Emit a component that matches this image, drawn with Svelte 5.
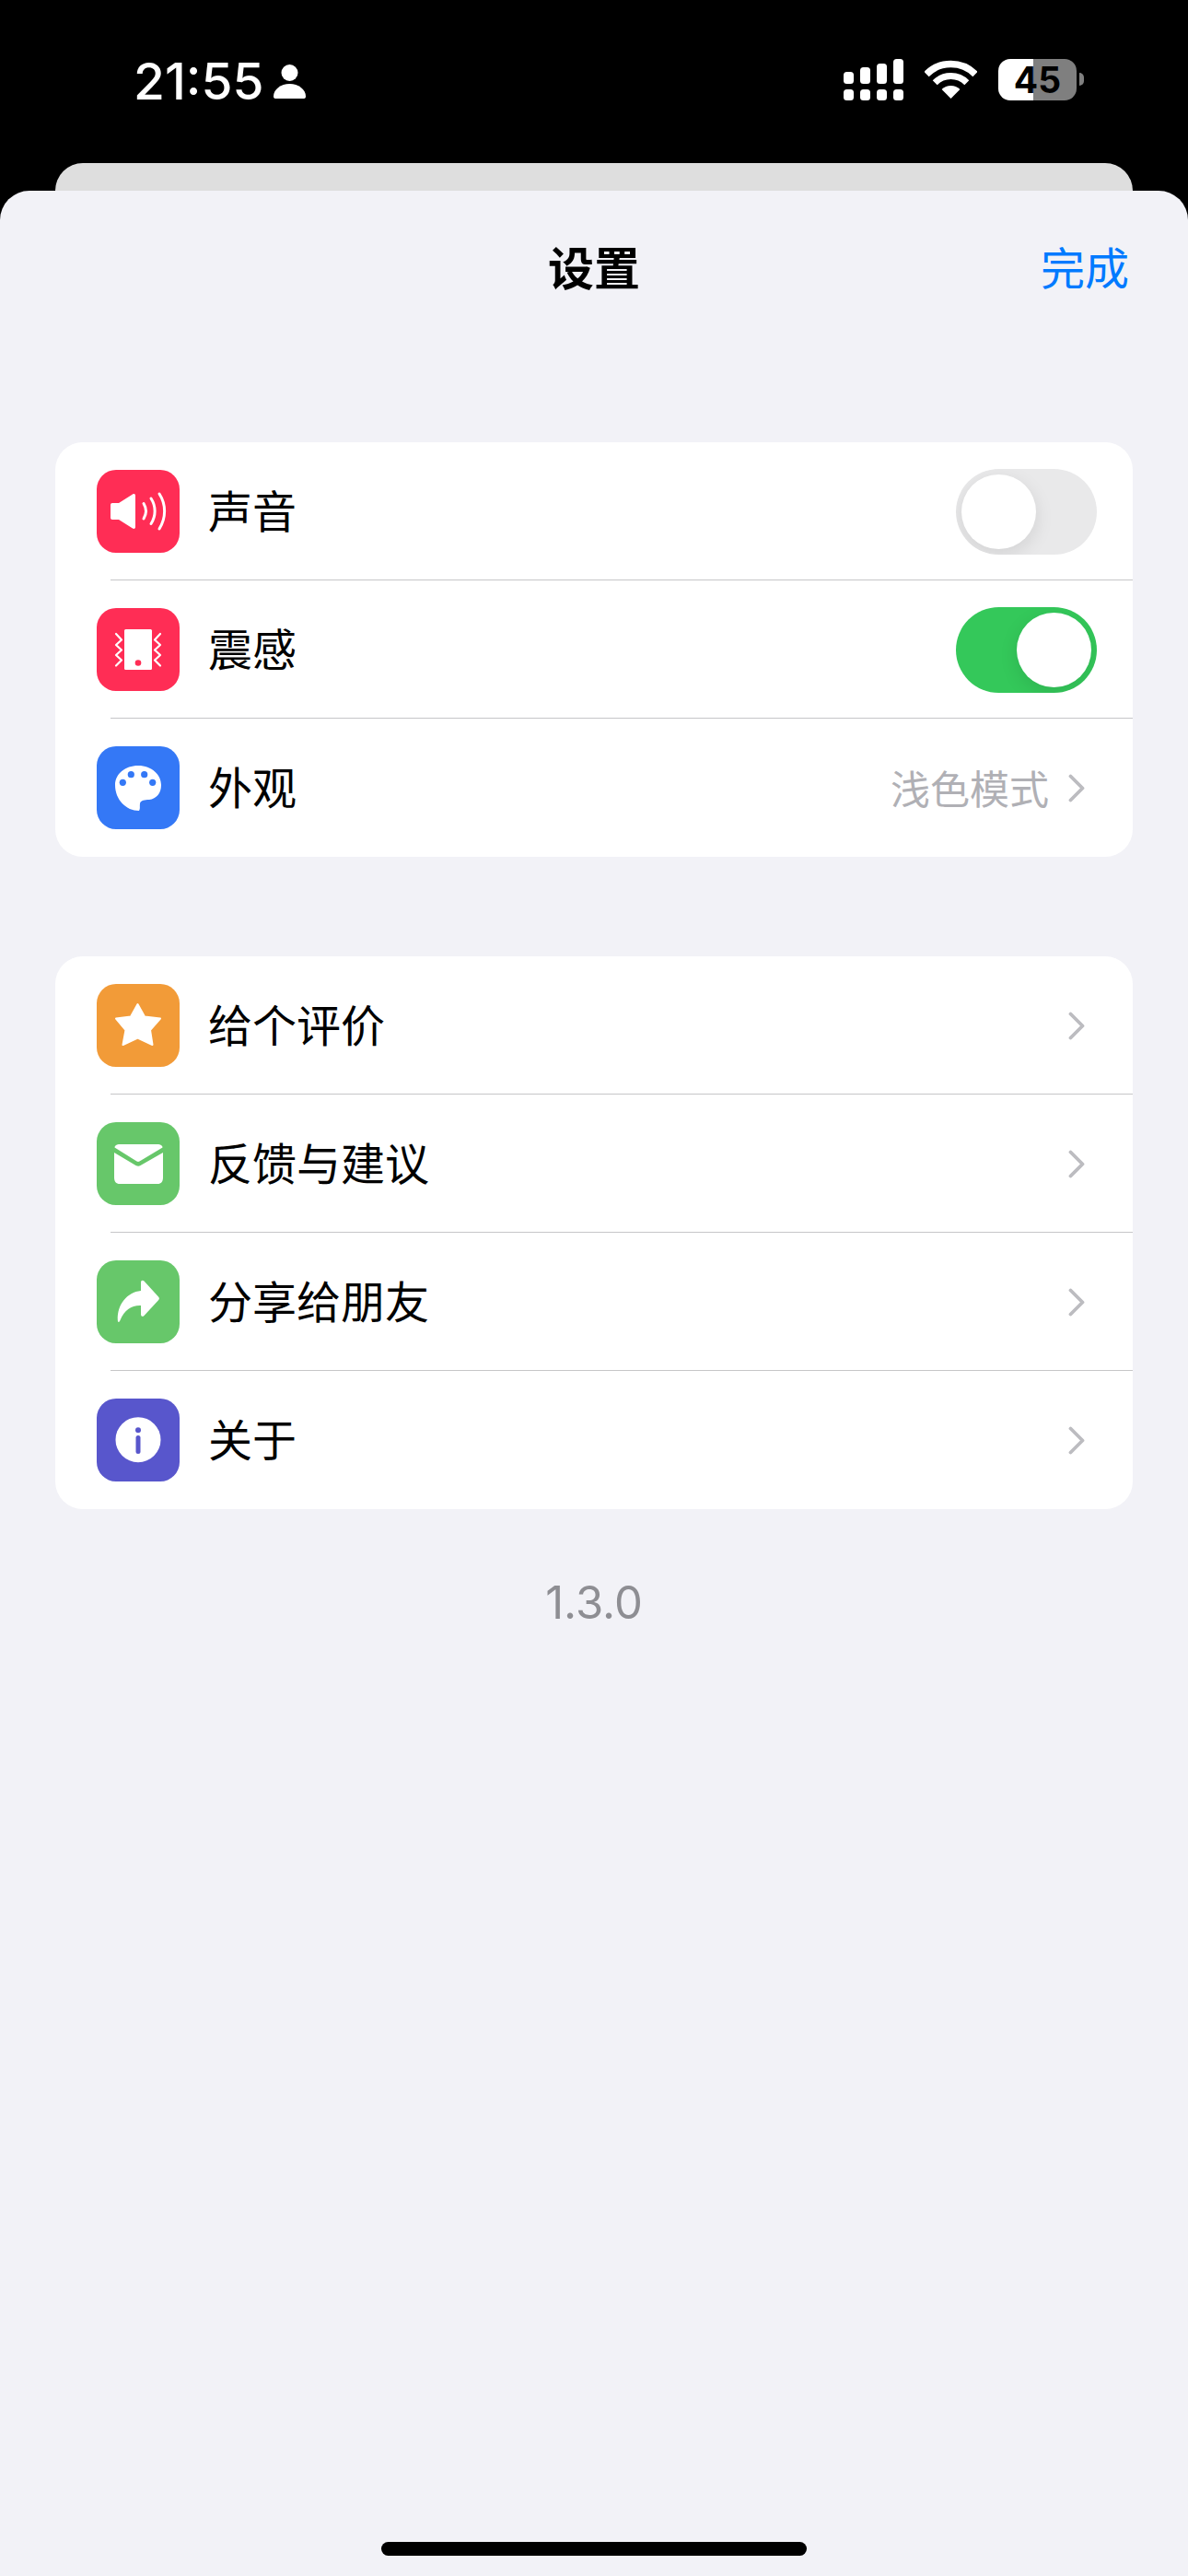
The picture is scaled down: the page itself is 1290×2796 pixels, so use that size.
<script>
  const sections = [
    [
      { icon: "sound", color: "#ff2d55", label: "声音", toggle: false },
      { icon: "vibrate", color: "#ff2d55", label: "震感", toggle: true },
      { icon: "palette", color: "#3478f6", label: "外观", value: "浅色模式" },
    ],
    [
      { icon: "star", color: "#f29b38", label: "给个评价" },
      { icon: "mail", color: "#67c76a", label: "反馈与建议" },
      { icon: "share", color: "#67c76a", label: "分享给朋友" },
      { icon: "info", color: "#5856cc", label: "关于" },
    ],
  ];
</script>

<div class="page">
  <div class="status">
    <div class="status-left">
      <span class="time">21:55</span>
      <svg class="person" width="35" height="38" viewBox="0 0 35 38">
        <circle cx="17.5" cy="10" r="9" fill="#fff" />
        <path d="M2 38C.5 38 0 37 0 35.5 0 28 8 22 17.5 22S35 28 35 35.5C35 37 34.500 38 33 38Z" fill="#fff" />
      </svg>
    </div>
    <div class="status-right">
      <svg class="signal" width="65" height="45" viewBox="0 0 65 45" fill="#fff">
        <rect x="0" y="14" width="11" height="13" rx="3.500" />
        <rect x="18" y="9" width="11" height="18" rx="3.500" />
        <rect x="36" y="5" width="11" height="22" rx="3.500" />
        <rect x="54" y="0" width="11" height="27" rx="3.500" />
        <rect x="0" y="33" width="11" height="12" rx="3.500" />
        <rect x="18" y="33" width="11" height="12" rx="3.500" />
        <rect x="36" y="33" width="11" height="12" rx="3.500" />
        <rect x="54" y="33" width="11" height="12" rx="3.500" />
      </svg>
      <svg class="wifi" width="57" height="42" viewBox="0 0 57 42" fill="none" stroke="#fff">
        <path d="M2 15.500A37.500 37.500 0 0 1 55 15.500" stroke-width="7.500" />
        <path d="M11.200 24.700A24.500 24.500 0 0 1 45.800 24.700" stroke-width="7" />
        <path d="M28.500 42L18.600 32.100A14 14 0 0 1 38.400 32.100Z" fill="#fff" stroke="none" />
      </svg>
      <div class="battery">45</div>
      <div class="battery-cap"></div>
    </div>
  </div>

  <div class="back-sheet"></div>

  <div class="sheet">
    <div class="nav">
      <span></span>
      <span class="title">设置</span>
      <span class="done">完成</span>
    </div>

    {#each sections as rows}
      <div class="card">
        {#each rows as row, i}
          {#if i > 0}<div class="sep"></div>{/if}
          <div class="row">
            <div class="icon" style="background: {row.color}">
              <svg width="90" height="90" viewBox="0 0 90 90">
                {#if row.icon === "sound"}
                  <path d="M17 36H24L39 26.500C41 25.500 42 26.500 42 28V62C42 63.500 41 64.500 39 63.500L24 54H17C15.800 54 15 53.200 15 52V38C15 36.800 15.800 36 17 36Z" fill="#fff" />
                  <g fill="none" stroke="#fff" stroke-width="3" stroke-linecap="round">
                    <path d="M51 36.500C54 41.500 54 48 51 53" />
                    <path d="M59 31C64.500 39.500 64.500 50 59 58.500" />
                    <path d="M68 26C75.500 37.500 75.500 52 68 64" />
                  </g>
                {:else if row.icon === "vibrate"}
                  <rect x="30" y="23" width="30" height="44" rx="1.500" fill="#fff" />
                  <circle cx="45" cy="59.500" r="3.300" fill={row.color} />
                  <g fill="none" stroke="#fff" stroke-width="2.200" stroke-linecap="round" stroke-linejoin="round">
                    <path d="M21 28L27 34.500 21 40 27 45.500 21 51 27 56.500 21 62.500" />
                    <path d="M69 28L63 34.500 69 40 63 45.500 69 51 63 56.500 69 62.500" />
                  </g>
                {:else if row.icon === "palette"}
                  <path d="M45 21C60 21 70 31 70 42C70 51 65 57 57 58C52 58.300 48 58.500 47 62C46.500 65 47.500 68 46 70C32 70 20 58 20 42C20 30 31 21 45 21Z" fill="#fff" />
                  <g fill={row.color}>
                    <circle cx="37.300" cy="30.700" r="3.600" />
                    <circle cx="51.700" cy="30.700" r="3.600" />
                    <circle cx="28.300" cy="39.300" r="3.600" />
                    <circle cx="60.700" cy="39.300" r="3.600" />
                  </g>
                {:else if row.icon === "star"}
                  <path d="M44.500 22L52 35.500 69 37.500 58 50 60.500 66 44.500 58.500 28.500 66 31.500 50 21 37.500 37 35.500Z" fill="#fff" stroke="#fff" stroke-width="2" stroke-linejoin="round" />
                {:else if row.icon === "mail"}
                  <path d="M25 24H66C69 24 71.500 25.500 71.500 27.500L46.500 42.500C45.500 43 44.500 43 43.500 42.500L19.500 27.500C19.500 25.500 22 24 25 24Z" fill="#fff" />
                  <path d="M19 33L42.500 47C44.500 48 46 48 47.500 47L72 33V60C72 64.500 70 67 66 67H25C21 67 19 64.500 19 60Z" fill="#fff" />
                {:else if row.icon === "share"}
                  <path d="M48 24C48 21.500 50 21 51.500 22.500L67 39.500C68.200 40.800 68.200 42 67 43.300L51.500 60C50 61.500 48 61 48 58.500V49C38 48.500 30 54 25.500 65C24.500 67.500 23 67.500 22.800 65C22 48 33 34.500 48 33Z" fill="#fff" />
                {:else if row.icon === "info"}
                  <circle cx="45" cy="44.700" r="24.500" fill="#fff" />
                  <circle cx="45" cy="34.300" r="3" fill={row.color} />
                  <path d="M45 42.500V57.500" stroke={row.color} stroke-width="5" stroke-linecap="round" />
                {/if}
              </svg>
            </div>
            <span class="label">{row.label}</span>
            {#if row.toggle !== undefined}
              <div class="toggle" class:on={row.toggle}><div class="knob"></div></div>
            {:else}
              {#if row.value}<span class="value">{row.value}</span>{/if}
              <svg class="chevron" width="18" height="31" viewBox="0 0 18 31" fill="none" stroke="#bcbcc0" stroke-width="3.800" stroke-linecap="round" stroke-linejoin="round">
                <path d="M2.500 2.500L15.500 15.500 2.500 28.500" />
              </svg>
            {/if}
          </div>
        {/each}
      </div>
    {/each}

    <div class="version">1.3.0</div>
    <div class="home-indicator"></div>
  </div>
</div>

<style>
  :global(body) {
    background: #000;
  }

  .page {
    width: 1290px;
    height: 2796px;
    display: flex;
    flex-direction: column;
    background: #000;
    font-family: "Noto Sans CJK SC", Inter, sans-serif;
    color: #000;
    overflow: hidden;
  }

  .status {
    height: 177px;
    flex: none;
    display: flex;
    justify-content: space-between;
    align-items: flex-start;
    padding: 64px 113px 0 145px;
    box-sizing: border-box;
  }
  .status-left {
    display: flex;
    align-items: flex-start;
    gap: 11px;
  }
  .time {
    font-family: Inter, sans-serif;
    font-weight: 500;
    font-size: 55px;
    line-height: 48px;
    color: #fff;
  }
  .person {
    margin-top: 5px;
  }
  .status-right {
    display: flex;
    align-items: flex-start;
  }
  .wifi {
    margin: 1px 23px 0 23px;
  }
  .battery {
    width: 85px;
    height: 45px;
    border-radius: 13px;
    background: linear-gradient(90deg, #fff 38px, #7f7f7f 38px);
    font-family: Inter, sans-serif;
    font-weight: 700;
    font-size: 39px;
    line-height: 45px;
    text-align: center;
    color: #000;
  }
  .battery-cap {
    width: 5px;
    height: 14px;
    margin: 15px 0 0 3px;
    border-radius: 0 5px 5px 0;
    background: #7f7f7f;
  }

  .back-sheet {
    height: 30px;
    flex: none;
    margin: 0 60px;
    border-radius: 30px 30px 0 0;
    background: #dedede;
  }

  .sheet {
    flex: 1;
    display: flex;
    flex-direction: column;
    border-radius: 32px 32px 0 0;
    background: #f2f2f7;
  }

  .nav {
    height: 170px;
    flex: none;
    display: grid;
    grid-template-columns: 1fr auto 1fr;
    align-items: center;
    padding: 0 64px 9px;
    margin-bottom: 103px;
    box-sizing: border-box;
    font-size: 48px;
  }
  .title {
    font-size: 50px;
    font-weight: 600;
  }
  .done {
    justify-self: end;
    color: #007aff;
  }

  .card {
    margin: 0 60px 108px;
    border-radius: 30px;
    background: #fff;
  }
  .row {
    height: 150px;
    display: flex;
    align-items: center;
    padding: 0 52px 0 45px;
  }
  .sep {
    height: 1px;
    margin: -1px 0 0 60px;
    background: #c6c6c8;
  }
  .icon {
    width: 90px;
    height: 90px;
    flex: none;
    border-radius: 21px;
  }
  .icon svg {
    display: block;
  }
  .label {
    flex: 1;
    margin-left: 31px;
    padding-bottom: 7px;
    font-size: 48px;
  }
  .value {
    margin-right: 21px;
    padding-bottom: 3px;
    font-size: 43px;
    color: #b0b0b5;
  }
  .chevron {
    flex: none;
  }

  .toggle {
    width: 153px;
    height: 93px;
    flex: none;
    display: flex;
    align-items: center;
    padding: 0 6px;
    margin-right: -13px;
    box-sizing: border-box;
    border-radius: 47px;
    background: #e9e9ea;
    overflow: hidden;
  }
  .toggle.on {
    justify-content: flex-end;
    background: #34c85a;
  }
  .knob {
    width: 81px;
    height: 81px;
    border-radius: 50%;
    background: #fff;
    box-shadow: 0 6px 20px rgba(0, 0, 0, 0.1);
  }

  .version {
    margin-top: -36px;
    text-align: center;
    font-family: Inter, sans-serif;
    font-weight: 400;
    font-size: 49px;
    color: #8e8e93;
  }

  .home-indicator {
    width: 462px;
    height: 15px;
    flex: none;
    margin: auto auto 22px;
    border-radius: 8px;
    background: #000;
  }
</style>
